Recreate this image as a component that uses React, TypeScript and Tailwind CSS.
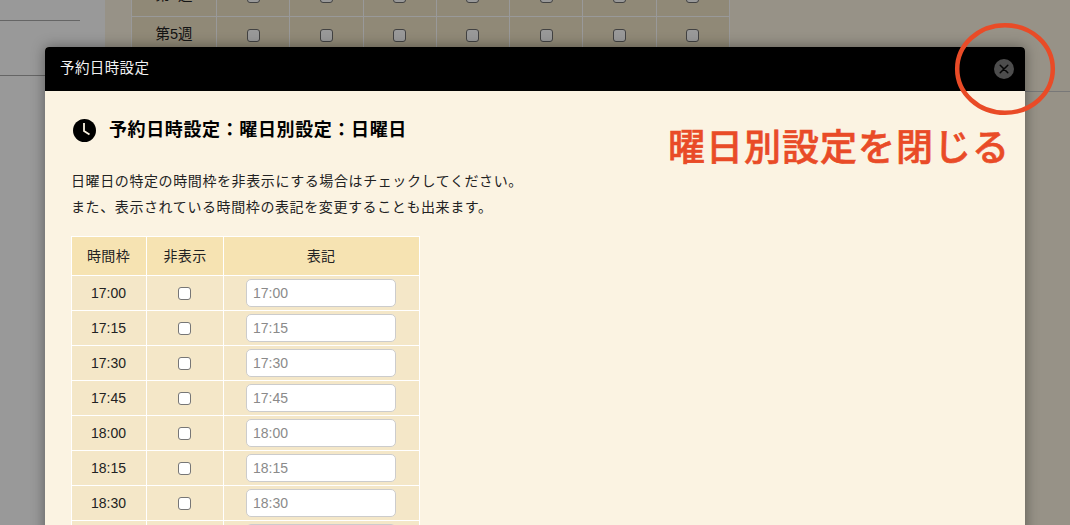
const FONT = "font-['Liberation_Sans','Noto_Sans_CJK_JP',sans-serif]"

const slots = ['17:00', '17:15', '17:30', '17:45', '18:00', '18:15', '18:30', '18:45']

function Check({ dim }: { dim?: boolean }) {
  return (
    <input
      type="checkbox"
      className={
        'block appearance-none w-[13px] h-[13px] rounded-[3px] border bg-white ' +
        (dim ? 'border-[#6f6f6f]' : 'border-[#767676]')
      }
    />
  )
}

function WeekRow({ label, height }: { label: string; height: string }) {
  return (
    <div className={'flex border-b border-l border-white bg-[#f0e4c6] ' + height}>
      <div className="w-[85px] shrink-0 flex items-center justify-center text-[14.5px] text-[#222] border-r border-white">
        {label}
      </div>
      {[0, 1, 2, 3, 4, 5, 6].map((i) => (
        <div key={i} className="flex-1 flex items-center justify-center border-r border-white">
          <Check dim />
        </div>
      ))}
    </div>
  )
}

function BackPage() {
  return (
    <div className="flex h-[525px]">
      {/* side column */}
      <div className="w-[105px] shrink-0 bg-white">
        <div className="w-[80px] h-[21px] border-b border-[#a9a9a9]" />
        <div className="h-[55px] border-b border-[#a9a9a9]" />
      </div>
      {/* main area */}
      <div className="flex-1 bg-[#fcf3e2] pl-[26px]">
        <div className="-mt-[24px] w-[599px]">
          <WeekRow label="第4週" height="h-[41px]" />
          <WeekRow label="第5週" height="h-[37px]" />
        </div>
        <div className="mt-[37px] ml-[894px] w-[45px] border-b border-[#c9c9c9]" />
      </div>
    </div>
  )
}

function Modal() {
  return (
    <div className="absolute left-[45px] top-[47px] w-[980px] h-[520px] rounded-t-[4px] overflow-hidden bg-[#fbf3e2] shadow-[0_0_14px_rgba(0,0,0,0.4)]">
      <div className="flex items-center justify-between h-[44px] bg-black pl-[15px] pr-[11px]">
        <span className="text-[14.5px] tracking-[0.4px] text-[#f2f2f2]">予約日時設定</span>
        <button className="flex items-center justify-center w-[20px] h-[20px] rounded-full bg-[#4d4d4d]">
          <svg width="10" height="10" viewBox="0 0 10 10">
            <path d="M1.2 1.2 L8.8 8.8 M8.8 1.2 L1.2 8.8" stroke="#050505" strokeWidth="1.5" strokeLinecap="round" />
          </svg>
        </button>
      </div>

      <div className="pl-[26px] pt-[26px]">
        <div className="flex items-center gap-[14px] h-[26px] ml-[2px]">
          <svg width="23" height="23" viewBox="0 0 23 23" className="shrink-0">
            <circle cx="11.5" cy="11.5" r="11.5" fill="#000" />
            <path d="M11 4 V12 L16.5 15.5" fill="none" stroke="#fbf3e2" strokeWidth="1.8" />
          </svg>
          <h2 className="text-[18px] font-bold tracking-[0.62px] text-black -ml-px">予約日時設定：曜日別設定：日曜日</h2>
        </div>

        <div className="mt-[25px] text-[14px] leading-[26px] tracking-[0.6px] text-[#222]">
          <p>日曜日の特定の時間枠を非表示にする場合はチェックしてください。</p>
          <p>また、表示されている時間枠の表記を変更することも出来ます。</p>
        </div>

        <table className="mt-[16px] w-[349px] table-fixed border-collapse text-[14px] text-[#222] border border-white">
          <colgroup>
            <col className="w-[75px]" />
            <col className="w-[77px]" />
            <col />
          </colgroup>
          <thead>
            <tr className="h-[39px] bg-[#f6e3b2] tracking-[0.3px]">
              <th className="font-normal border border-white pr-px">時間枠</th>
              <th className="font-normal border border-white">非表示</th>
              <th className="font-normal border border-white pr-px">表記</th>
            </tr>
          </thead>
          <tbody>
            {slots.map((s) => (
              <tr key={s} className="h-[35px] bg-[#f4e7c8]">
                <td className="text-center border border-white pr-px">{s}</td>
                <td className="border border-white pr-px">
                  <div className="flex justify-center">
                    <Check />
                  </div>
                </td>
                <td className="border border-white pr-px">
                  <div className="flex justify-center">
                    <input
                      placeholder={s}
                      className="block w-[150px] h-[28px] rounded-[5px] border border-[#cccccc] bg-white px-[6px] text-[14px] placeholder:text-[#8a8a8a]"
                    />
                  </div>
                </td>
              </tr>
            ))}
          </tbody>
        </table>
      </div>
    </div>
  )
}

export default function App() {
  return (
    <div className={'relative w-[1070px] h-[525px] overflow-hidden ' + FONT}>
      <BackPage />
      {/* dim layer */}
      <div className="absolute inset-0 bg-black/40" />
      <Modal />

      {/* annotation */}
      <svg width="110" height="100" viewBox="0 0 110 100" className="absolute left-[950px] top-[20px]">
        <ellipse cx="55" cy="49" rx="47.8" ry="43.8" fill="none" stroke="#e94b27" strokeWidth="4.5" />
      </svg>
      <div className="absolute left-[668px] top-[125px] text-[37px] font-medium [-webkit-text-stroke:0.6px_#e94b27] leading-[48px] tracking-[1px] text-[#e94b27] whitespace-nowrap">
        曜日別設定を閉じる
      </div>
    </div>
  )
}
